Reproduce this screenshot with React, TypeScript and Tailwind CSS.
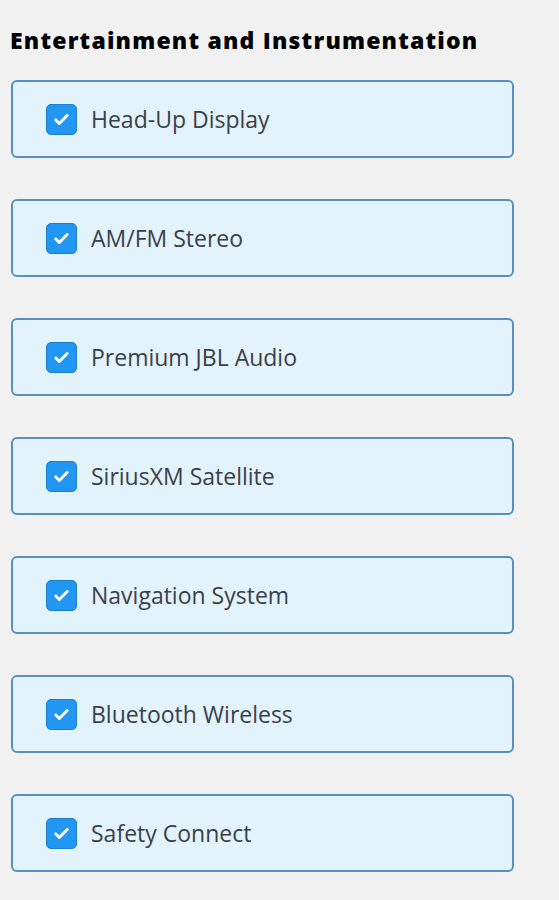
const features = [
  "Head-Up Display",
  "AM/FM Stereo",
  "Premium JBL Audio",
  "SiriusXM Satellite",
  "Navigation System",
  "Bluetooth Wireless",
  "Safety Connect",
];

function CheckBox() {
  return (
    <span className="flex h-[31px] w-[31px] shrink-0 items-center justify-center rounded-[5px] border border-[#1b7fd0] bg-[#2196f3]">
      <svg viewBox="0 0 24 24" className="h-[21px] w-[21px]" fill="none">
        <path
          d="M5.5 12.5l4 4L18.5 7.5"
          stroke="white"
          strokeWidth="3.4"
          strokeLinecap="round"
          strokeLinejoin="round"
        />
      </svg>
    </span>
  );
}

export default function App() {
  return (
    <div className="min-h-[900px] w-[559px] bg-[#f1f1f1] pl-[10px] pt-[25px]">
      <h2 className="text-[23px] font-extrabold leading-[30px] tracking-[1.2px] text-black [font-family:'Open_Sans',sans-serif]">
        Entertainment and Instrumentation
      </h2>
      <div className="ml-[1px] mt-[25px] flex w-[503px] flex-col gap-[41px]">
        {features.map((label) => (
          <label
            key={label}
            className="flex h-[78px] items-center gap-[14px] rounded-[6px] border-2 border-[#5790bf] bg-[#e3f3fc] pl-[33px]"
          >
            <CheckBox />
            <span className="text-[23px] text-[#3b4048] [font-family:'Open_Sans',sans-serif]">
              {label}
            </span>
          </label>
        ))}
      </div>
    </div>
  );
}
